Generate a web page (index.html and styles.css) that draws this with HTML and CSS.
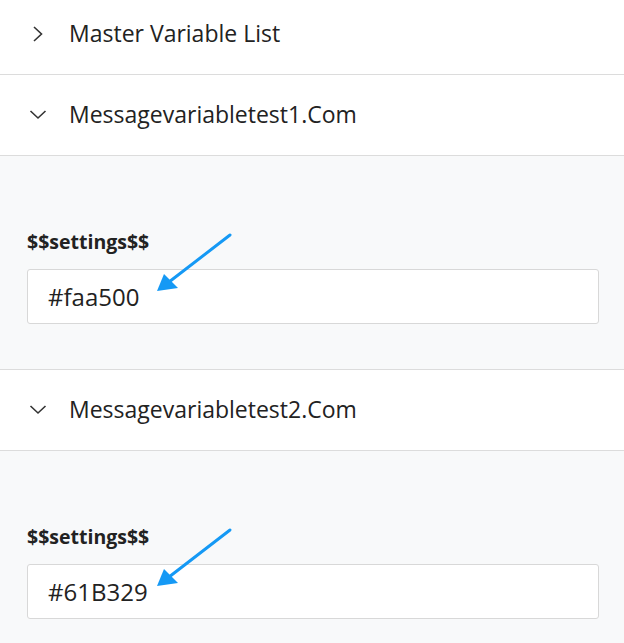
FILE: index.html
```html
<!DOCTYPE html>
<html>
<head>
<meta charset="utf-8">
<link rel="stylesheet" href="styles.css">
</head>
<body>
<div class="list">
  <div class="header">
    <svg class="chev" width="20" height="20" viewBox="0 0 20 20"><path d="M6 3 L13.5 10 L6 17" fill="none" stroke="#333" stroke-width="1.6"/></svg>
    <span class="title">Master Variable List</span>
  </div>
  <div class="header">
    <svg class="chev" width="20" height="20" viewBox="0 0 20 20"><path d="M2.5 6 L10 13 L17.5 6" fill="none" stroke="#333" stroke-width="1.6"/></svg>
    <span class="title">Messagevariabletest1.Com</span>
  </div>
  <div class="panel">
    <div class="label">$$settings$$</div>
    <div class="field">
      <div class="input">#faa500</div>
      <svg class="arrow" width="100" height="80" viewBox="0 0 100 80"><line x1="83" y1="6" x2="22" y2="53" stroke="#1599f5" stroke-width="3" stroke-linecap="round"/><polygon points="10,62 17,45 31,59" fill="#1599f5"/></svg>
    </div>
  </div>
  <div class="header">
    <svg class="chev" width="20" height="20" viewBox="0 0 20 20"><path d="M2.5 6 L10 13 L17.5 6" fill="none" stroke="#333" stroke-width="1.6"/></svg>
    <span class="title">Messagevariabletest2.Com</span>
  </div>
  <div class="panel panel-last">
    <div class="label">$$settings$$</div>
    <div class="field">
      <div class="input">#61B329</div>
      <svg class="arrow" width="100" height="80" viewBox="0 0 100 80"><line x1="83" y1="6" x2="22" y2="53" stroke="#1599f5" stroke-width="3" stroke-linecap="round"/><polygon points="10,62 17,45 31,59" fill="#1599f5"/></svg>
    </div>
  </div>
</div>
</body>
</html>
```
FILE: styles.css
```css
html, body {
  margin: 0;
  padding: 0;
  background: #ffffff;
  font-family: "Open Sans", "Liberation Sans", sans-serif;
  color: #222;
  overflow: hidden;
}
.list {
  margin-top: -6px;
}
.header {
  height: 80px;
  border-bottom: 1px solid #dcdcdc;
  display: flex;
  align-items: center;
  background: #fff;
}
.chev {
  margin-left: 28px;
  width: 20px;
  height: 20px;
  flex: none;
}
.title {
  margin-left: 21px;
  font-size: 23px;
  line-height: 28px;
  margin-top: -2px;
}
.panel {
  background: #f8f9fa;
  border-bottom: 1px solid #dcdcdc;
  padding: 76px 25px 45px 27px;
}
.panel-last {
  padding-top: 76px;
  border-bottom: none;
}
.label {
  font-size: 19.5px;
  font-weight: 700;
  line-height: 20px;
  margin-bottom: 17px;
}
.field {
  position: relative;
}
.input {
  height: 53px;
  border: 1px solid #d8d8d8;
  border-radius: 3px;
  background: #fff;
  display: flex;
  align-items: center;
  padding-left: 20px;
  font-size: 24px;
}
.arrow {
  position: absolute;
  left: 120px;
  top: -40px;
}
```
